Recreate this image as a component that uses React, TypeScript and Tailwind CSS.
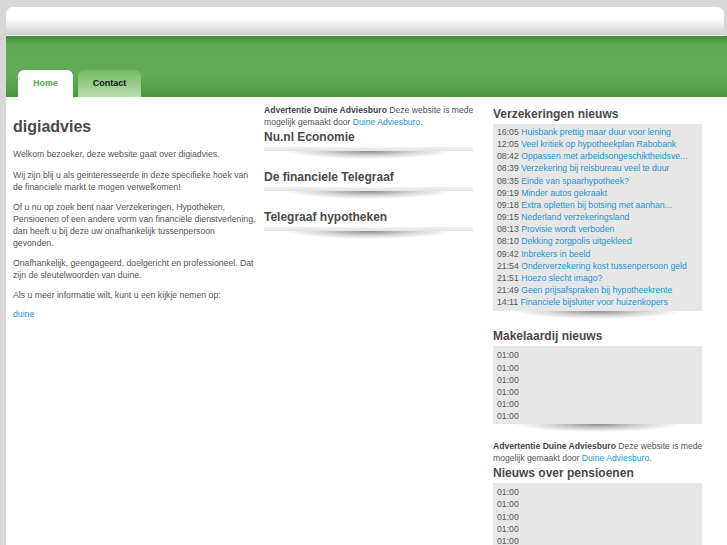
import React from "react";

const font = { fontFamily: '"Liberation Sans", Arial, sans-serif' };

const verzekeringen = [
  ["16:05", "Huisbank prettig maar duur voor lening"],
  ["12:05", "Veel kritiek op hypotheekplan Rabobank"],
  ["08:42", "Oppassen met arbeidsongeschiktheidsve..."],
  ["08:39", "Verzekering bij reisbureau veel te duur"],
  ["08:35", "Einde van spaarhypotheek?"],
  ["09:19", "Minder autos gekraakt"],
  ["09:18", "Extra opletten bij botsing met aanhan..."],
  ["09:15", "Nederland verzekeringsland"],
  ["08:13", "Provisie wordt verboden"],
  ["08:10", "Dekking zorgpolis uitgekleed"],
  ["09:42", "Inbrekers in beeld"],
  ["21:54", "Onderverzekering kost tussenpersoon geld"],
  ["21:51", "Hoezo slecht imago?"],
  ["21:49", "Geen prijsafspraken bij hypotheekrente"],
  ["14:11", "Financiele bijsluiter voor huizenkopers"],
];

const Shadow = () => (
  <div className="h-[10px] bg-[radial-gradient(ellipse_50%_100%_at_50%_0%,#8f8f8f,#d4d4d4_45%,transparent_80%)]" />
);

const Bar = () => (
  <div className="mt-[3px]">
    <div className="h-[4px] bg-gradient-to-b from-[#f2f2f2] to-[#e2e2e2]" />
    <Shadow />
  </div>
);

const Ad = () => (
  <p className="text-[8.6px] leading-[12px] text-[#555] whitespace-nowrap">
    <b className="text-[#444]">Advertentie Duine Adviesburo</b> Deze website is mede
    <br />
    mogelijk gemaakt door <span className="text-[#1e95d3]">Duine Adviesburo</span>.
  </p>
);

const NewsBox = ({ items, pt, pb }: { items: string[][]; pt: string; pb: string }) => (
  <div>
    <div className={`bg-[#e7e7e7] px-[4px] ${pt} ${pb}`}>
      {items.map(([t, title], i) => (
        <div key={i} className="text-[8.7px] leading-[12.15px] whitespace-nowrap">
          <span className="text-[#555]">{t}</span>{" "}
          <span className="text-[#1e95d3]">{title}</span>
        </div>
      ))}
    </div>
    <Shadow />
  </div>
);

export default function App() {
  const empty = Array.from({ length: 6 }, () => ["01:00", ""]);
  return (
    <div style={font} className="min-h-[545px] w-[727px] overflow-hidden bg-[#d7d7d7] pt-[7px] pl-[6px]">
      <div className="h-[29px] w-[718px] rounded-t-[7px] bg-gradient-to-b from-white via-white via-40% to-[#cfcfcf] border-b border-[#f0f0f0]" />
      <div className="h-[61px] bg-[linear-gradient(to_bottom,#3e8d34_0px,#5ea953_8px,#62ab57_40px,#54a149_52px,#46983c_61px)] flex items-end pl-[12px] gap-[5px]">
        <div className="w-[55px] h-[27px] rounded-t-[6px] bg-white flex items-center justify-center text-[9px] font-bold text-[#58a94b]">
          Home
        </div>
        <div className="w-[63px] h-[27px] rounded-t-[6px] bg-gradient-to-b from-[#73bb65] to-[#b7ddad] flex items-center justify-center text-[9px] font-bold text-[#111]">
          Contact
        </div>
      </div>
      <div className="bg-white flex items-start pl-[7px] h-[460px]">
        <div className="w-[240px] pt-[21px] text-[8.7px] leading-[12px] text-[#555] whitespace-nowrap">
          <h1 className="text-[16px] leading-[18px] font-bold text-[#4a4a4a] mb-[12px]">digiadvies</h1>
          <p className="mb-[9px]">Welkom bezoeker, deze website gaat over digiadvies.</p>
          <p className="mb-[8px]">
            Wij zijn blij u als geinteresseerde in deze specifieke hoek van
            <br />
            de financiele markt te mogen verwelkomen!
          </p>
          <p className="mb-[8px]">
            Of u nu op zoek bent naar Verzekeringen, Hypotheken,
            <br />
            Pensioenen of een andere vorm van financiële dienstverlening,
            <br />
            dan heeft u bij deze uw onafhankelijk tussenpersoon
            <br />
            gevonden.
          </p>
          <p className="mb-[8px]">
            Onafhankelijk, geengageerd, doelgericht en professioneel. Dat
            <br />
            zijn de sleutelwoorden van duine.
          </p>
          <p className="mb-[7px]">Als u meer informatie wilt, kunt u een kijkje nemen op:</p>
          <p className="text-[#1e95d3]">duine</p>
        </div>
        <div className="w-[209px] ml-[11px] pt-[7px]">
          <Ad />
          {["Nu.nl Economie", "De financiele Telegraaf", "Telegraaf hypotheken"].map((h, i) => (
            <div key={h} className={i === 0 ? "mt-[2px]" : "mt-[9px]"}>
              <h2 className="text-[12px] leading-[14px] font-bold text-[#4a4a4a]">{h}</h2>
              <Bar />
            </div>
          ))}
        </div>
        <div className="w-[209px] ml-[20px] pt-[10px]">
          <h2 className="text-[12px] leading-[14px] font-bold text-[#4a4a4a] mb-[3px]">Verzekeringen nieuws</h2>
          <NewsBox items={verzekeringen} pt="pt-[2px]" pb="pb-[3px]" />
          <h2 className="mt-[8px] text-[12px] leading-[14px] font-bold text-[#4a4a4a] mb-[3px]">Makelaardij nieuws</h2>
          <NewsBox items={empty} pt="pt-[3px]" pb="pb-[2px]" />
          <div className="mt-[6px]">
            <Ad />
          </div>
          <h2 className="mt-[2px] text-[12px] leading-[14px] font-bold text-[#4a4a4a] mb-[3px]">Nieuws over pensioenen</h2>
          <NewsBox items={empty} pt="pt-[3px]" pb="pb-[2px]" />
        </div>
      </div>
    </div>
  );
}
